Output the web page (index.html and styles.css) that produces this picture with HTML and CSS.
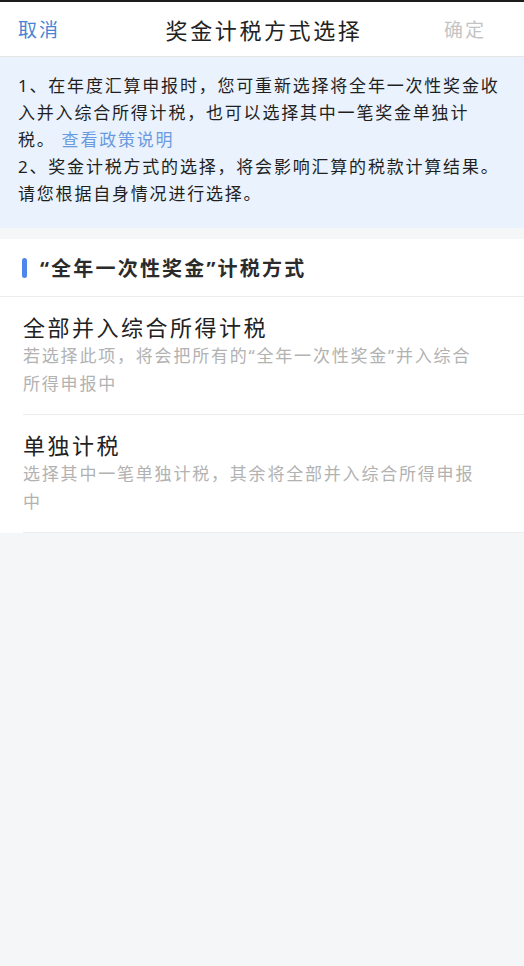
FILE: index.html
```html
<!DOCTYPE html>
<html lang="zh-CN">
<head>
<meta charset="utf-8">
<title>奖金计税方式选择</title>
<link rel="stylesheet" href="styles.css">
</head>
<body>
<div class="topline"></div>
<header class="navbar">
  <span class="nav-btn nav-cancel">取消</span>
  <span class="nav-title">奖金计税方式选择</span>
  <span class="nav-btn nav-ok">确定</span>
</header>
<section class="notice">
  <p class="notice-text">1、在年度汇算申报时，您可重新选择将全年一次性奖金收入并入综合所得计税，也可以选择其中一笔奖金单独计税。<span class="link">查看政策说明</span></p>
  <p class="notice-text">2、奖金计税方式的选择，将会影响汇算的税款计算结果。请您根据自身情况进行选择。</p>
</section>
<section class="panel">
  <div class="panel-head">
    <span class="bar"></span>
    <span class="panel-title">“全年一次性奖金”计税方式</span>
  </div>
  <div class="option">
    <div class="option-title">全部并入综合所得计税</div>
    <div class="option-desc">若选择此项，将会把所有的“全年一次性奖金”并入综合所得申报中</div>
  </div>
  <div class="option">
    <div class="option-title">单独计税</div>
    <div class="option-desc">选择其中一笔单独计税，其余将全部并入综合所得申报中</div>
  </div>
</section>
</body>
</html>
```
FILE: styles.css
```css
* { box-sizing: border-box; }
html, body {
  margin: 0;
  padding: 0;
  background: #f5f6f8;
  font-family: "Noto Sans", "Noto Sans CJK SC", sans-serif;
  color: #222;
}
.topline {
  height: 2px;
  background: #1c1c1c;
}
.navbar {
  height: 55px;
  background: #fff;
  border-bottom: 1px solid #e6e6e6;
  display: grid;
  grid-template-columns: 1fr auto 1fr;
  align-items: center;
  padding: 0 38px 0 18px;
}
.nav-btn {
  font-size: 19px;
  letter-spacing: 2px;
}
.nav-cancel { color: #4a82d4; justify-self: start; }
.nav-ok { color: #c4c4c4; justify-self: end; }
.nav-title {
  font-size: 22px;
  letter-spacing: 2.6px;
  color: #222;
  margin-left: 24px;
}
.notice {
  background: #eaf2fd;
  padding: 15px 21px 21px 18px;
}
.notice-text {
  margin: 0;
  font-size: 17px;
  letter-spacing: 1.8px;
  line-height: 27px;
  color: #1f1f1f;
}
.link {
  color: #6a9be0;
  margin-left: 6px;
}
.panel {
  margin-top: 11px;
  background: #fff;
}
.panel-head {
  height: 58px;
  border-bottom: 1px solid #ececec;
  display: flex;
  align-items: center;
  padding-left: 22px;
}
.bar {
  width: 5px;
  height: 20px;
  border-radius: 3px;
  background: #4f86ec;
  margin-right: 13px;
}
.panel-title {
  font-size: 20px;
  font-weight: 700;
  letter-spacing: 2.2px;
  color: #2b2b2b;
}
.option {
  margin-left: 23px;
  padding: 15px 44px 16px 0;
  border-bottom: 1px solid #ececec;
}
.option-title {
  font-size: 22px;
  letter-spacing: 2.5px;
  line-height: 30px;
  color: #222;
}
.option-desc {
  font-size: 17px;
  letter-spacing: 1.8px;
  line-height: 28px;
  color: #b2b2b2;
}
```
